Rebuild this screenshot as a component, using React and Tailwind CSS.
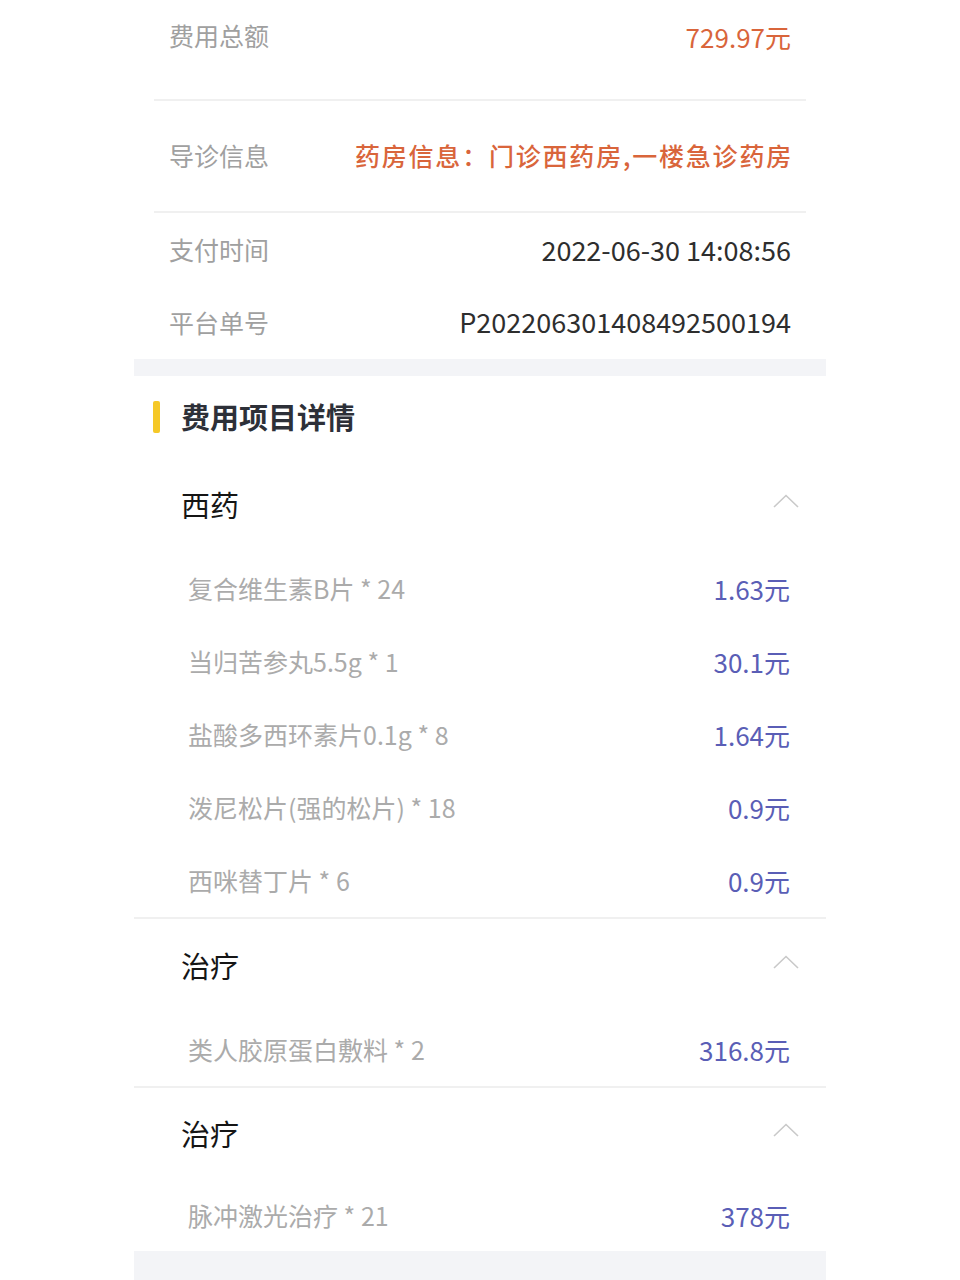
import React from 'react';

const font = { fontFamily: '"Noto Sans CJK SC", "Noto Sans", sans-serif' };

const groups = [
  {
    title: '西药',
    items: [
      { name: '复合维生素B片 * 24', price: '1.63元' },
      { name: '当归苦参丸5.5g * 1', price: '30.1元' },
      { name: '盐酸多西环素片0.1g * 8', price: '1.64元' },
      { name: '泼尼松片(强的松片) * 18', price: '0.9元' },
      { name: '西咪替丁片 * 6', price: '0.9元' },
    ],
  },
  { title: '治疗', items: [{ name: '类人胶原蛋白敷料 * 2', price: '316.8元' }] },
  { title: '治疗', items: [{ name: '脉冲激光治疗 * 21', price: '378元' }] },
];

const ChevronUp = () => (
  <svg width="26" height="14" viewBox="0 0 26 14" fill="none">
    <path d="M1 13 L13 1.5 L25 13" stroke="#c9c9c9" strokeWidth="1.6" />
  </svg>
);

const InfoRow = ({ label, children, className = '' }) => (
  <div className={`flex items-center justify-between px-[15px] ${className}`}>
    <span className="text-[25px] text-[#a0a0a0]">{label}</span>
    {children}
  </div>
);

export default function App() {
  return (
    <div className="min-h-screen bg-white" style={font}>
      <div className="w-[692px] mx-auto bg-white">
        {/* info block */}
        <div className="px-[20px]">
          <InfoRow label="费用总额" className="h-[101px] pb-[27px] border-b-2 border-[#f0f0f0]">
            <span className="text-[26px] text-[#d9653b]">729.97元</span>
          </InfoRow>
          <InfoRow label="导诊信息" className="h-[112px] border-b-2 border-[#f0f0f0]">
            <span className="text-[25px] tracking-[1.8px] -mr-[2px] font-medium text-[#d9653b]">药房信息：门诊西药房,一楼急诊药房</span>
          </InfoRow>
          <InfoRow label="支付时间" className="h-[73px] pt-[1px]">
            <span className="text-[27px] text-[#2e2e2e]">2022-06-30 14:08:56</span>
          </InfoRow>
          <InfoRow label="平台单号" className="h-[73px]">
            <span className="text-[27px] text-[#2e2e2e]">P202206301408492500194</span>
          </InfoRow>
        </div>

        <div className="h-[17px] bg-[#f3f4f7]" />

        {/* section title */}
        <div className="h-[82px] flex items-center pl-[19px]">
          <div className="w-[7px] h-[32px] rounded-[2px] bg-[#f5c827]" />
          <span className="ml-[21px] text-[29px] font-bold text-[#2d3038]">费用项目详情</span>
        </div>

        {groups.map((g, gi) => {
          const last = gi === groups.length - 1;
          return (
            <div key={gi} className={last ? '' : 'border-b-2 border-[#f0f0f0]'}>
              <div className={`${last ? 'h-[92px]' : 'h-[94px]'} flex items-center justify-between pl-[47px] pr-[27px]`}>
                <span className="text-[29px] text-[#151515]">{g.title}</span>
                <span className="-mt-[8px]"><ChevronUp /></span>
              </div>
              {g.items.map((it, i) => (
                <div key={i} className={`${last ? 'h-[71px]' : 'h-[73px]'} flex items-center justify-between pl-[54px] pr-[36px]`}>
                  <span className="text-[25px] text-[#ababab]">{it.name}</span>
                  <span className="text-[26px] text-[#5a5eb6]">{it.price}</span>
                </div>
              ))}
            </div>
          );
        })}

        <div className="h-[30px] bg-[#f3f4f7]" />
      </div>
    </div>
  );
}
